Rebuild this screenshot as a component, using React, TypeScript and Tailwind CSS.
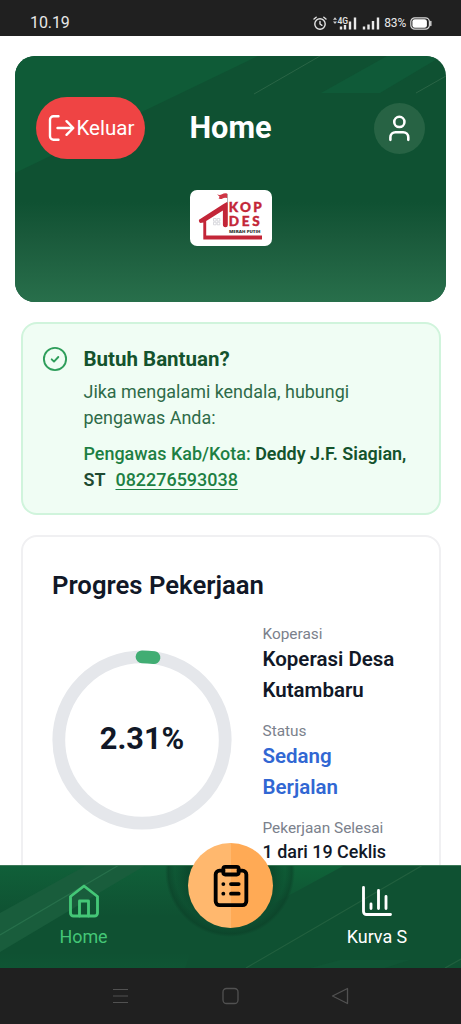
import React from "react";
import { ClipboardList, User } from "lucide-react";

function StatusBar() {
  return (
    <div className="flex h-9 shrink-0 items-center justify-between bg-[#202020] pt-[10px] pr-[29px] pl-[30px] text-[#e8e8e8]">
      <span className="text-[16px] leading-none tracking-[-0.1px]">10.19</span>
      <div className="flex items-center">
        <svg width="14" height="15" viewBox="0 0 14 15" fill="none" stroke="#e4e4e4" strokeWidth="1.4" strokeLinecap="round">
          <circle cx="7" cy="8" r="5.2" />
          <path d="M7 5.4V8l1.9 1.3M1 3 3.2 1.200M13 3l-2.200-1.800" />
        </svg>
        <svg className="ml-[5px]" width="27" height="16" viewBox="0 0 27 16">
          <path d="M1 4.800 3 2.200l2 2.600zM1 6.400 3 9l2-2.600z" fill="#d0d0d0" />
          <text x="5.500" y="8.500" fontSize="8.500" fontWeight="600" fill="#e0e0e0" fontFamily="Roboto, sans-serif">4G</text>
          <path d="M9 14.500v-3M13 14.500v-4.500M18 14.500V6.500M23 14.500V2.500" stroke="#e8e8e8" strokeWidth="2.400" />
        </svg>
        <svg className="ml-[3px]" width="18" height="16" viewBox="0 0 18 16">
          <path d="M2 14.500v-3M6.500 14.500V9.500M11 14.500V6M16 14.500V2.500" stroke="#e8e8e8" strokeWidth="2.400" />
        </svg>
        <span className="ml-[4px] text-[12px] leading-none tracking-[-0.2px]">83%</span>
        <svg className="ml-[4px]" width="22" height="13" viewBox="0 0 22 13">
          <rect x="0.8" y="0.8" width="18.600" height="11.400" rx="4" fill="none" stroke="#d8d8d8" strokeWidth="1.200" />
          <rect x="2.400" y="2.200" width="14.500" height="8.600" rx="2.400" fill="#fff" />
          <path d="M20.800 4.500v4" stroke="#d8d8d8" strokeWidth="1.400" strokeLinecap="round" />
        </svg>
      </div>
    </div>
  );
}

function Logo() {
  return (
    <svg width="82" height="56" viewBox="0 0 82 56" className="rounded-[7px] bg-white">
      <path d="M9 29.800 33.500 14l4.300-2.500V35q0 2.200-2.300 2.200-2.600 0-2.600-2.400V20.500L16.200 31v14.500H72v4H13.300V32.500l-2.800.6q-2-.6-1.500-3.300z" fill="#c32638" />
      <path d="M37.500 4v9" stroke="#9a9a9a" strokeWidth=".7" />
      <path d="M27 4.200q2.600 1.600 5 0t5.200-.8v4.600q-2.800-.8-4.600.4t-4 .2l1-1.800z" fill="#cf3545" />
      <path d="M23.500 28.500h2.600v2.600h-2.600zM27.200 28.500h2.600v2.600h-2.600zM23.500 32.200h2.600v2.600h-2.600zM27.200 32.200h2.600v2.600h-2.600z" fill="none" stroke="#cfcfd6" strokeWidth=".8" />
      <g fill="#c32638" stroke="#c32638" strokeWidth=".4" fontFamily="Lato, sans-serif" fontWeight="900" fontSize="13.500">
        <text x="38.800" y="21.800" textLength="33" lengthAdjust="spacing">KOP</text>
        <text x="38.800" y="36" textLength="31" lengthAdjust="spacing">DES</text>
      </g>
      <text x="39" y="43.400" fontSize="4.200" fontWeight="800" fontFamily="Open Sans, sans-serif" fill="#333" textLength="31.500" lengthAdjust="spacingAndGlyphs">MERAH PUTIH</text>
    </svg>
  );
}

function Header() {
  return (
    <header className="relative mx-[15px] mt-5 h-[246px] overflow-hidden rounded-[20px] bg-[#0f5132]">
      <svg className="absolute inset-0" width="431" height="246" viewBox="0 0 431 246">
        <defs>
          <linearGradient id="fade" x1="0" y1="0" x2="0" y2="1">
            <stop offset="0" stopColor="#0f5132" />
            <stop offset=".35" stopColor="#1a5a3b" />
            <stop offset="1" stopColor="#286f4b" />
          </linearGradient>
        </defs>
        <path d="M0 0H243L0 117z" fill="#0f5b37" />
        <path d="M306 37 372 0H427L365 37z" fill="#0f5a38" />
        <path d="M239 38 305 0M401 37l30-17" stroke="#2a6546" strokeWidth="1" />
        <rect y="146" width="431" height="100" fill="url(#fade)" />
      </svg>
      <div className="relative flex items-center justify-between pt-[41px] pr-[21px] pl-[21px]">
        <button className="flex h-[62px] w-[109px] items-center gap-[2px] rounded-full bg-[#ef4444] pl-[11.500px] text-[20.500px] text-white">
          <svg className="shrink-0" width="27" height="28" viewBox="0 0 27 28" fill="none" stroke="currentColor" strokeWidth="2.400" strokeLinecap="round" strokeLinejoin="round">
            <path d="M10.500 2.200H5.500A3.500 3.500 0 0 0 2 5.700v16.600a3.500 3.500 0 0 0 3.500 3.500h5M9.500 14H25M18.500 7.200 25.300 14l-6.800 6.800" />
          </svg>
          Keluar
        </button>
        <h1 className="absolute left-1/2 -translate-x-1/2 text-[30.700px] font-bold text-white">Home</h1>
        <div className="flex size-[51px] items-center justify-center rounded-full bg-[#276344] text-white">
          <User size={30.7} strokeWidth={2} />
        </div>
      </div>
      <div className="relative mt-[30.500px] flex justify-center">
        <Logo />
      </div>
    </header>
  );
}

function HelpCard() {
  return (
    <section className="mx-[20.500px] mt-5 flex h-[193px] rounded-[16px] border-2 border-[#d0f4dc] bg-[#f0fdf4] px-[20px] pt-[20px]">
      <svg className="mt-[1px] -ml-px shrink-0" width="27" height="27" viewBox="0 0 27 27" fill="none" stroke="#2f9e5b" strokeWidth="1.900" strokeLinecap="round" strokeLinejoin="round">
        <circle cx="13" cy="14" r="11.100" />
        <path d="m9.700 14.300 2.300 2.300 4.300-4.600" />
      </svg>
      <div className="ml-[15px] text-[17.960px] leading-[25.600px] text-[#2e6b48]">
        <h2 className="text-[20.500px] leading-[31.400px] font-bold text-[#14532d]">Butuh Bantuan?</h2>
        <p className="mt-[4px]">
          Jika mengalami kendala, hubungi
          <br />
          pengawas Anda:
        </p>
        <p className="mt-[10.500px] whitespace-nowrap font-medium text-[#1d7f43]">
          Pengawas Kab/Kota: <span className="font-semibold text-[#14532d]">Deddy J.F. Siagian,</span>
          <br />
          <span className="font-semibold text-[#1f4a31]">ST</span>
          <span className="ml-[10px] underline underline-offset-[3px]">082276593038</span>
        </p>
      </div>
    </section>
  );
}

function ProgressRing({ percent }: { percent: number }) {
  const r = 83.2;
  const length = 2 * Math.PI * r;
  return (
    <div className="relative mt-[26px] flex size-[180px] shrink-0 items-center justify-center">
      <svg className="absolute inset-0 -rotate-90" width="180" height="180" viewBox="0 0 180 180" fill="none" strokeWidth="12.800">
        <circle cx="90" cy="90" r={r} stroke="#e5e7eb" />
        <circle cx="90" cy="90" r={r} stroke="#41ad73" strokeLinecap="round" strokeDasharray={`${(length * percent) / 100} ${length}`} />
      </svg>
      <span className="relative text-[30.700px] font-bold text-[#111827]">{percent}%</span>
    </div>
  );
}

function ProgressCard() {
  return (
    <section className="mx-[20.500px] mt-5 h-[400px] rounded-[16px] border-2 border-[#f0f0f2] bg-white px-[29.500px] pt-[29.500px]">
      <h2 className="text-[25.700px] leading-[36px] font-semibold text-[#111827]">Progres Pekerjaan</h2>
      <div className="mt-[21px] flex items-start gap-[30.500px]">
        <ProgressRing percent={2.31} />
        <dl className="text-[20.500px] leading-[30.700px] font-semibold whitespace-nowrap text-[#111827]">
          <dt className="text-[15.400px] leading-[20.500px] font-normal text-[#7b818c]">Koperasi</dt>
          <dd>Koperasi Desa<br />Kutambaru</dd>
          <dt className="mt-[15.400px] text-[15.400px] leading-[20.500px] font-normal text-[#7b818c]">Status</dt>
          <dd className="text-[#3167d3]">Sedang<br />Berjalan</dd>
          <dt className="mt-[15.400px] text-[15.400px] leading-[20.500px] font-normal text-[#7b818c]">Pekerjaan Selesai</dt>
          <dd className="text-[17.930px] leading-[25.600px] font-medium">1 dari 19 Ceklis</dd>
        </dl>
      </div>
    </section>
  );
}

function BottomNav() {
  return (
    <nav className="relative flex h-[103px] shrink-0 justify-between bg-[#0f5132] text-[17.930px] text-white">
      <svg className="absolute inset-0" width="461" height="103" viewBox="0 0 461 103">
        <defs>
          <linearGradient id="navTop" x1="0" y1="0" x2="0" y2="1">
            <stop offset="0" stopColor="#106039" />
            <stop offset=".5" stopColor="#0f5132" />
            <stop offset=".85" stopColor="#0f5132" />
            <stop offset="1" stopColor="#0f5534" />
          </linearGradient>
          <linearGradient id="corner" x1="0" y1="0" x2="0" y2="1">
            <stop offset="0" stopColor="#0f6439" />
            <stop offset="1" stopColor="#0f5132" />
          </linearGradient>
          <radialGradient id="notch">
            <stop offset=".65" stopColor="#093d25" stopOpacity=".6" />
            <stop offset=".85" stopColor="#0b432a" stopOpacity=".25" />
            <stop offset=".95" stopColor="#0b3f27" stopOpacity=".6" />
            <stop offset="1" stopColor="#0b3f27" stopOpacity="0" />
          </radialGradient>
        </defs>
        <path d="M0 0H220L185 103H0z" fill="url(#navTop)" />
        <path d="M200 0H345L262 45H200z" fill="url(#corner)" />
        <path d="M0 48 87 0H146L0 87z" fill="#195d3c" />
        <path d="M0 70 119 0" stroke="#27704b" strokeWidth="1.200" />
        <path d="M246 103 423 0M445 103l16-9" stroke="#22603f" strokeWidth="1.200" />
        <path d="M310 103 340 95H410L385 103z" fill="#105535" />
        <ellipse cx="230" cy="6" rx="65" ry="66" fill="url(#notch)" />
        <path d="M0 .5H461" stroke="#3c7858" strokeWidth="1" />
      </svg>
      <div className="relative flex w-[167px] flex-col items-center pt-[17.500px] text-[#44c777]">
        <svg width="36" height="36" viewBox="0 0 24 24" fill="none" stroke="currentColor" strokeWidth="1.900" strokeLinecap="round" strokeLinejoin="round">
          <path d="m3 9 9-7 9 7v11a2 2 0 0 1-2 2H5a2 2 0 0 1-2-2z" />
          <path d="M9 22V12h6v10" />
        </svg>
        <span className="mt-[5px] leading-[25.600px]">Home</span>
      </div>
      <button className="absolute top-[-22px] left-[188px] flex size-[85px] items-center justify-center rounded-full bg-linear-to-r from-[#ffb86e] from-50% to-[#ffaa55] to-50% text-black">
        <ClipboardList size={46} strokeWidth={2} />
      </button>
      <div className="relative flex w-[168px] flex-col items-center pt-[17.500px]">
        <svg width="36" height="36" viewBox="0 0 24 24" fill="none" stroke="currentColor" strokeWidth="1.900" strokeLinecap="round" strokeLinejoin="round">
          <path d="M3 3v16a2 2 0 0 0 2 2h16M18 17V9M13 17V5M8 17v-3" />
        </svg>
        <span className="mt-[5px] leading-[25.600px]">Kurva S</span>
      </div>
    </nav>
  );
}

function SystemBar() {
  return (
    <div className="flex h-14 shrink-0 items-center justify-between bg-[#202020] px-[112px]">
      <svg width="17" height="18" viewBox="0 0 17 18" fill="none" stroke="#515151" strokeWidth="1.200">
        <path d="M1 2.500h15M1 9h15M1 15.500h15" />
      </svg>
      <svg width="17" height="18" viewBox="0 0 17 18" fill="none" stroke="#515151" strokeWidth="1.300">
        <rect x="1" y="1.500" width="15" height="15" rx="3.500" />
      </svg>
      <svg width="18" height="18" viewBox="0 0 18 18" fill="none" stroke="#515151" strokeWidth="1.300" strokeLinejoin="round">
        <path d="M16.500 1.500v15L1.500 9z" />
      </svg>
    </div>
  );
}

export default function App() {
  return (
    <div className="flex h-[1024px] w-[461px] flex-col overflow-hidden bg-white font-['Roboto',sans-serif]">
      <StatusBar />
      <main className="h-[829px] shrink-0 overflow-hidden">
        <Header />
        <HelpCard />
        <ProgressCard />
      </main>
      <BottomNav />
      <SystemBar />
    </div>
  );
}
